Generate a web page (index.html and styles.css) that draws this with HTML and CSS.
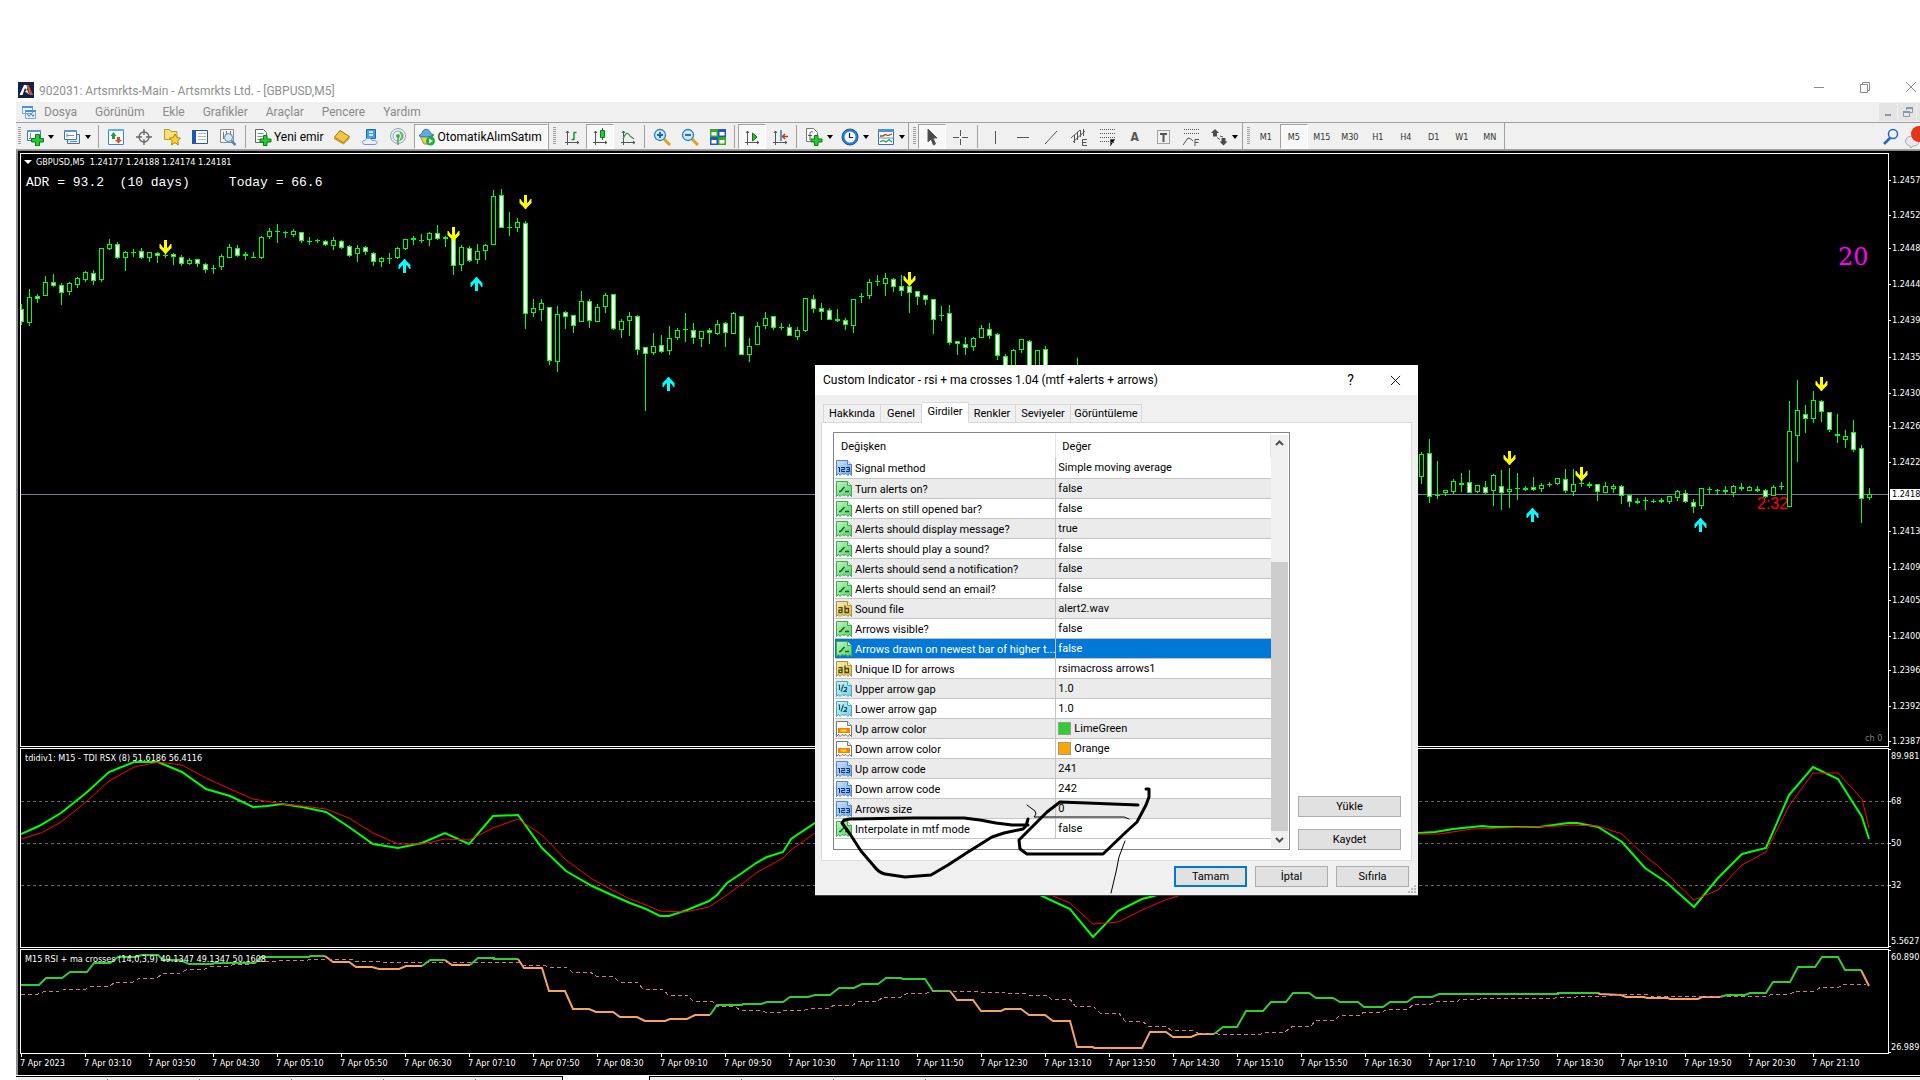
FILE: index.html
```
<!DOCTYPE html>
<html lang="tr">
<head>
<meta charset="utf-8">
<title>902031: Artsmrkts-Main - Artsmrkts Ltd. - [GBPUSD,M5]</title>
<link rel="stylesheet" href="styles.css">
</head>
<body>
<svg class="defs" aria-hidden="true">
  <defs>
    <linearGradient id="gGreen" x2="1" y2="1"><stop offset="0" stop-color="#b9f7bd"/><stop offset="1" stop-color="#5fd06c"/></linearGradient>
    <linearGradient id="gBlue" x2="1" y2="1"><stop offset="0" stop-color="#cfe4fb"/><stop offset="1" stop-color="#6ea6e0"/></linearGradient>
    <linearGradient id="gGold" x2="1" y2="1"><stop offset="0" stop-color="#f6edb0"/><stop offset="1" stop-color="#d9c254"/></linearGradient>
    <linearGradient id="gCyan" x2="1" y2="1"><stop offset="0" stop-color="#d2f4fa"/><stop offset="1" stop-color="#74cfe0"/></linearGradient>
    <path id="page" d="M.5.5h11l4 4v11l-2-2-1.500 2-2-2-2 1-2-1-2 2-1.500-2-2 2z"/>
  </defs>
  <symbol id="t-bool" viewBox="0 0 16 16"><use href="#page" fill="url(#gGreen)" stroke="#3fa850"/><path d="M11.500.5v4h4" fill="#dcfbe0" stroke="#3fa850"/><path d="M3 10.500h1.500L8.500 6M9 10.500h4" fill="none" stroke="#14602a" stroke-width="1.500"/></symbol>
  <symbol id="t-int" viewBox="0 0 16 16"><use href="#page" fill="url(#gBlue)" stroke="#4f86c4"/><path d="M11.500.5v4h4" fill="#eaf3fd" stroke="#4f86c4"/><path d="M2 7.500h1.500V12M5 7.500h3.500v2h-3v2H9M10 7.500h3.500v4H10M11 9.500h2.500" fill="none" stroke="#0f2f66"/></symbol>
  <symbol id="t-str" viewBox="0 0 16 16"><use href="#page" fill="url(#gGold)" stroke="#a8923a"/><path d="M11.500.5v4h4" fill="#fbf7d8" stroke="#a8923a"/><path d="M2.500 6.700h3.500v5H3v-2.500h3M9 4.500v7h3.500V7.500H9" fill="none" stroke="#4d4008" stroke-width="1.300"/></symbol>
  <symbol id="t-dbl" viewBox="0 0 16 16"><use href="#page" fill="url(#gCyan)" stroke="#4ba6ba"/><path d="M11.500.5v4h4" fill="#ecfbfe" stroke="#4ba6ba"/><path d="M2.500 4h1v5M7.500 3.500l-2.500 7M8 6.500h2.500v2L8 10.500h3" fill="none" stroke="#175564" stroke-width="1.200"/></symbol>
  <symbol id="t-col" viewBox="0 0 16 16"><use href="#page" fill="#fff" stroke="#777"/><path d="M11.500.5v4h4" fill="#eee" stroke="#777"/><path d="M2 7h12v5H2z" fill="#ff7a00"/><path d="M4.500 8.500h6v2h-6z" fill="#ffee20"/></symbol>
</svg>

<div class="app">
  <header class="titlebar">
    <svg class="logo" viewBox="0 0 16 16"><path fill="#14224a" d="M0 0h16v16H0z"/><path fill="#fff" d="M1.500 13L6 3h2.500l1 3-1 2L7 6l-2.500 7z"/><path fill="#e0532c" d="M8.500 3h2l4.500 10h-3z"/><path fill="#fff" d="M7 10l2-2.500 2.500 5.500L9 10.500z"/></svg>
    <h1>902031: Artsmrkts-Main - Artsmrkts Ltd. - [GBPUSD,M5]</h1>
    <div class="winctl">
      <button aria-label="Simge durumuna küçült"><svg viewBox="0 0 12 12"><path d="M1 6.500h10"/></svg></button>
      <button aria-label="Geri yükle"><svg viewBox="0 0 12 12"><path d="M1.500 3.500h7v8h-7zM3.500 3.500v-2h7v8h-2"/></svg></button>
      <button aria-label="Kapat"><svg viewBox="0 0 12 12"><path d="M1 1l10 10M11 1L1 11"/></svg></button>
    </div>
  </header>

  <nav class="menubar">
    <svg class="docicon" viewBox="0 0 15 15"><path fill="#e8f2fb" stroke="#7ba6cf" d="M1.500 1.500h10v7h-10zM4.500 5.500h10v8h-10z"/><path fill="#4f8fd0" d="M1 1h11v2H1zM4 5h11v2H4z"/><path fill="none" stroke="#4a7fb5" d="M6 8.500l2 3 2-3 2 3 1-2"/></svg>
    <a href="#">Dosya</a><a href="#">Görünüm</a><a href="#">Ekle</a><a href="#">Grafikler</a><a href="#">Araçlar</a><a href="#">Pencere</a><a href="#">Yardım</a>
    <div class="docctl">
      <button aria-label="Küçült"><svg viewBox="0 0 16 16"><path fill="#8698aa" d="M5 10h6v2H5z"/></svg></button>
      <button aria-label="Önceki boyut"><svg viewBox="0 0 16 16"><path fill="none" stroke="#8698aa" stroke-width="1" d="M4.500 7.500h6v5h-6zM7.500 6V3.500h6v5H11"/><path fill="#8698aa" d="M4 7h7v2H4zM7 3h7v2H7z"/></svg></button>
      <button aria-label="Pencereyi kapat"></button>
    </div>
  </nav>

  <div class="toolbar">
    <div class="group first">
      <button class="drop" aria-label="Yeni grafik"><svg viewBox="0 0 18 18"><path fill="#fff" stroke="#3c73b0" d="M1.500 2.500h13v10h-13z"/><path fill="#5c96d4" d="M1 2h14v2H1z"/><path stroke="#6a8bb0" d="M4.500 5v6M3 10.500h5"/><path fill="#22cc32" stroke="#0b7a18" d="M9.500 6.500h4v4h4v3.500h-4v4h-4v-4h-4v-3.500h4z"/></svg></button>
      <button class="drop" aria-label="Profiller"><svg viewBox="0 0 18 18"><path fill="#e4eefa" stroke="#3c73b0" d="M4.500 6.500h12v9h-12z"/><path fill="#fff" stroke="#3c73b0" d="M1.500 2.500h12v9h-12z"/><path fill="#5c96d4" d="M1 2h13v2H1z"/><path fill="none" stroke="#6a8bb0" d="M4 7.500h7M4 5.500v4M7 13.500h7"/></svg></button>
      <i class="sep"></i>
      <button aria-label="Piyasa gözlemi"><svg viewBox="0 0 18 18"><path fill="#fff" stroke="#3c86d0" d="M1.500 1.500h15v15h-15z"/><path fill="#5fb0ee" d="M1 1h16v2H1z"/><path fill="#1da035" d="M6.500 4l3 4H8v3H5V8H3.500z"/><path fill="#e04f2a" d="M11.500 15.500L8 12h2V9h3v3h2z"/></svg></button>
      <button aria-label="Veri penceresi"><svg viewBox="0 0 18 18"><g fill="none" stroke="#666" stroke-width="1.300"><circle cx="9" cy="9" r="5"/><path d="M9 1v6M9 11v6M1 9h6M11 9h6"/></g></svg></button>
      <button aria-label="Gezgin"><svg viewBox="0 0 18 18"><path fill="#f8e27a" stroke="#b99a24" d="M1.500 3V1.500h5L8 3.500h6v8H1.500z"/><path fill="#ffd23a" stroke="#b08114" d="M12 6l1.800 3.600 3.700.5-2.700 2.700.6 4-3.400-2-3.500 2 .7-4-2.700-2.700 3.800-.5z"/></svg></button>
      <button aria-label="Terminal"><svg viewBox="0 0 18 18"><path fill="#fff" stroke="#1f5aa6" d="M1.500 2.500h15v13h-15z"/><path fill="#1f5aa6" d="M1 2h4v14H1z"/><path stroke="#9fb9d6" d="M7 5.500h8M7 8.500h8M7 11.500h8"/></svg></button>
      <button aria-label="Strateji sınayıcı"><svg viewBox="0 0 18 18"><path fill="#f4f4f4" stroke="#8c8c8c" d="M1.500 1.500h13v13h-13z"/><path stroke="#777" d="M4.500 4v7M7.500 3v4M11.500 3v5"/><circle cx="9.500" cy="9.500" r="4" fill="#cfe6fa" fill-opacity=".85" stroke="#4f86c4"/><path stroke="#4f86c4" stroke-width="2.500" d="M12.500 13l4 4"/></svg></button>
      <i class="sep"></i>
      <button class="text"><svg viewBox="0 0 18 18"><path fill="#fff" stroke="#666" d="M1.500 1.500h8l3 3v10h-11z"/><path stroke="#888" d="M3.500 5.500h6M3.500 8.500h5M3.500 11.500h3"/><path fill="#22cc32" stroke="#0b7a18" d="M9.500 7.500h3.500v3.500h4v3h-4v3.500H9.500V14h-3.500v-3h3.500z"/></svg>Yeni emir</button>
      <button aria-label="MetaEditor"><svg viewBox="0 0 18 18"><path fill="#f2c544" stroke="#9c741a" d="M1.500 9L7 2.500l9.500 6L10.500 15z"/><path fill="#c48a1c" d="M1 9.500l9.500 6 6-6.500v1.500l-6 6L1 11z"/></svg></button>
      <button aria-label="Sanal sunucu"><svg viewBox="0 0 18 18"><path fill="#3ea2ee" stroke="#1d68b4" d="M5.500 1.500h9v9h-9z"/><path stroke="#fff" stroke-width="1.500" d="M8 4h4M8 7h4"/><path fill="#e8eff8" stroke="#7a96c0" d="M4 16.500c-4-1-3-4 0-4 1-3 6-3 7 0 5-1 7 3 3 4z"/></svg></button>
      <button aria-label="Sinyaller"><svg viewBox="0 0 18 18"><g fill="none" stroke="#8fa6b4"><circle cx="9" cy="8" r="7.500"/><circle cx="9" cy="8" r="5"/></g><path fill="none" stroke="#5cb868" stroke-width="2" d="M11 4c3 2 3 6 0 8"/><circle cx="9" cy="8" r="2" fill="#3fae4e"/><path stroke="#3fae4e" stroke-width="1.500" d="M9 9v8"/></svg></button>
      <button class="text auto pressed"><svg viewBox="0 0 18 18"><path fill="#f2cf52" stroke="#a8852a" d="M2 8h13l-4 8H6z"/><path fill="#5aaee4" stroke="#2a74ac" d="M1 7.500C3 6 4 6 4.500 4 5 .5 11 .5 12 4c.5 1.500 2 2 4 3-3 2-12 3-15 .5z"/><circle cx="12.500" cy="13" r="4.500" fill="#1db331"/><path fill="#fff" d="M11 10.500l4 2.500-4 2.500z"/></svg>OtomatikAlımSatım</button>
    </div>
    <div class="group charts">
      <button aria-label="Çubuk grafik"><svg viewBox="0 0 18 18"><path class="ax" d="M4.500 3v14M2 14.500h14M3 5l1.500-2L6 5M14 13l2 1.500-2 1.500"/><path fill="none" stroke="#14962a" stroke-width="1.500" d="M11 4v8M11 4.500h2.500M8.500 11.500H11"/></svg></button>
      <button class="pressed" aria-label="Mum grafik"><svg viewBox="0 0 18 18"><path class="ax" d="M4.500 3v14M2 14.500h14M3 5l1.500-2L6 5M14 13l2 1.500-2 1.500"/><path stroke="#0a7a1a" d="M11.500 0v12"/><path fill="#28c83c" stroke="#0a7a1a" d="M9.500 2.500h4v7h-4z"/></svg></button>
      <button aria-label="Çizgi grafik"><svg viewBox="0 0 18 18"><path class="ax" d="M4.500 3v14M2 14.500h14M3 5l1.500-2L6 5M14 13l2 1.500-2 1.500"/><path fill="none" stroke="#3a9a4a" stroke-width="1.300" d="M4 11c3-7 5-7 7-3l4 3"/></svg></button>
      <i class="sep"></i>
      <button aria-label="Yakınlaştır"><svg viewBox="0 0 18 18"><path stroke="#d8a520" stroke-width="3" d="M11 11l6 6"/><circle cx="7" cy="7" r="5.500" fill="#cdeafc" stroke="#2f7fc4" stroke-width="1.300"/><path stroke="#1d62a8" stroke-width="1.800" d="M4 7h6M7 4v6"/></svg></button>
      <button aria-label="Uzaklaştır"><svg viewBox="0 0 18 18"><path stroke="#d8a520" stroke-width="3" d="M11 11l6 6"/><circle cx="7" cy="7" r="5.500" fill="#cdeafc" stroke="#2f7fc4" stroke-width="1.300"/><path stroke="#1d62a8" stroke-width="1.800" d="M4 7h6"/></svg></button>
      <button aria-label="Pencereleri döşe"><svg viewBox="0 0 18 18"><path fill="#3aa81e" d="M1 1h8v8H1zM9 9h8v8H9z"/><path fill="#2456c8" d="M9 1h8v8H9zM1 9h8v8H1z"/><path fill="#fff" d="M2.500 4h5v3.500h-5zM10.500 4h5v3.500h-5zM2.500 12h5v3.500h-5zM10.500 12h5v3.500h-5z"/></svg></button>
      <i class="sep"></i>
      <button class="pressed" aria-label="Otomatik kaydır"><svg viewBox="0 0 18 18"><path class="ax" d="M4.500 3v14M2 14.500h14M3 5l1.500-2L6 5M14 13l2 1.500-2 1.500"/><path fill="#28b83c" stroke="#0a7a1a" d="M9.500 5l4.500 4-4.500 4z"/></svg></button>
      <button aria-label="Grafik kaydırma"><svg viewBox="0 0 18 18"><path class="ax" d="M4.500 3v14M2 14.500h14M3 5l1.500-2L6 5M14 13l2 1.500-2 1.500"/><path stroke="#3676b8" stroke-width="1.500" d="M10 2v11"/><path fill="none" stroke="#b8400e" stroke-width="1.500" d="M17 8.500h-5M14 6l-2.500 2.500L14 11"/></svg></button>
      <i class="sep"></i>
      <button class="drop" aria-label="Göstergeler"><svg viewBox="0 0 18 18"><path fill="#fff" stroke="#777" d="M1.500.5h7l4 4v9h-11z"/><path fill="none" stroke="#555" d="M8 4c-3-1-3 1-3 3v5M3 7.500h4"/><path fill="#22cc32" stroke="#0b7a18" d="M9.500 7.500h3.500v3.500h4v3h-4v3.500H9.500V14h-3.500v-3h3.500z"/></svg></button>
      <button class="drop" aria-label="Dönemler"><svg viewBox="0 0 18 18"><circle cx="9" cy="9" r="8" fill="#2a7fd4" stroke="#1656a0"/><circle cx="9" cy="9" r="5.500" fill="#f2f8fe"/><path fill="none" stroke="#223" stroke-width="1.200" d="M8.500 5v4.500h3.500"/></svg></button>
      <button class="drop" aria-label="Şablonlar"><svg viewBox="0 0 18 18"><path fill="#fff" stroke="#2f74c0" d="M1.500 1.500h15v15h-15z"/><path fill="#4a90dc" d="M1 1h16v3H1zM1 9.500h16v1H1z"/><path fill="none" stroke="#b03a1a" stroke-width="1.300" d="M3 8h3l2-1.500 3 1L15 6"/><path fill="none" stroke="#2a9a3c" stroke-width="1.300" d="M3 14l3-1.500 3 1.500 3-2.500 3 2.500"/></svg></button>
    </div>
    <div class="group mono">
      <button class="pressed" aria-label="İmleç"><svg viewBox="0 0 18 18"><path fill="#4a4a4a" d="M5 1v13l3-3 2.500 6 2-1L10 10h4z"/></svg></button>
      <button aria-label="Artı imleç"><svg viewBox="0 0 18 18"><path d="M9.500 2v6M9.500 11v6M2 9.500h6M11 9.500h6"/></svg></button>
      <i class="sep"></i>
      <button aria-label="Dikey çizgi"><svg viewBox="0 0 18 18"><path d="M9.500 3v13"/></svg></button>
      <button aria-label="Yatay çizgi"><svg viewBox="0 0 18 18"><path d="M3 9.500h12"/></svg></button>
      <button aria-label="Trend çizgisi"><svg viewBox="0 0 18 18"><path d="M3 16L15 3"/></svg></button>
      <button aria-label="Kanal"><svg viewBox="0 0 18 18"><path d="M1 10l9-8M3 14L15 3M4.500 7v8M7.500 4v8M10.500 2v7M13.500 1v7"/><path fill="none" d="M17 11.500h-4.500v6h4.500M12.500 14.500h4"/></svg></button>
      <button aria-label="Fibonacci"><svg viewBox="0 0 18 18"><path stroke-dasharray="1 1" d="M2 1.500h15M2 5.500h15M2 9.500h15M2 13.500h9"/><path d="M17 11.500h-4.500v6.500M12.500 14.500h3.500"/></svg></button>
      <button class="letter" aria-label="Metin">A</button>
      <button aria-label="Metin etiketi"><svg viewBox="0 0 18 18"><path fill="none" stroke-dasharray="1 1" d="M3.500 2.500h12v13h-12z"/><path stroke-width="2" d="M6 6h7M9.500 6v8"/></svg></button>
      <button aria-label="Fibonacci yayılımı"><svg viewBox="0 0 18 18"><path stroke-dasharray="1 1" d="M2 1.500h15M2 5.500h15"/><path fill="none" d="M1 17l5-7 3 1 2 2M17 11.500h-4v6.500M13 14.500h3.500"/></svg></button>
      <button class="drop" aria-label="Oklar"><svg viewBox="0 0 18 18"><path fill="#4a4a4a" stroke="none" d="M5 1l4 4H7v3.500H3V5H1zM13.500 17.500L9.500 13.500h2V10h4v3.500h2z"/><path d="M7 9.500l3 2M10 8l3 1"/></svg></button>
    </div>
    <div class="group frames">
      <button>M1</button><button class="pressed">M5</button><button>M15</button><button>M30</button><button>H1</button><button>H4</button><button>D1</button><button>W1</button><button>MN</button>
    </div>
    <div class="right">
      <button aria-label="Ara"><svg viewBox="0 0 18 18"><path stroke="#2a62c8" stroke-width="2.500" d="M8 10l-6 6"/><circle cx="11" cy="6" r="4.500" fill="#eaf4ff" stroke="#2a62c8" stroke-width="1.500"/></svg></button>
      <button class="msgs" aria-label="Mesajlar"><svg viewBox="0 0 20 24"><path fill="#e8e8ee" stroke="#a8a8b0" d="M6 11c-7 1-7 9-1 10l1 2 2-2c6 0 6-4 6-6z"/><circle cx="14" cy="9" r="8" fill="#e2361c"/></svg></button>
    </div>
  </div>

  <main class="workspace">
    <section class="panel price">
      <svg id="price" class="plot"></svg>
      <div class="caption"><span class="tri"></span>GBPUSD,M5&nbsp; 1.24177 1.24188 1.24174 1.24181</div>
      <pre class="adr">ADR = 93.2  (10 days)     Today = 66.6</pre>
    </section>
    <svg id="axisPrice" class="axis"></svg>
    <section class="panel tdi">
      <svg id="tdi" class="plot"></svg>
      <div class="caption">tdidiv1: M15 - TDI RSX (8) 51.6186 56.4116</div>
    </section>
    <svg id="axisTdi" class="axis"></svg>
    <section class="panel rsi">
      <svg id="rsi" class="plot"></svg>
      <div class="caption">M15 RSI + ma crosses (14,0,3,9) 49.1347 49.1347 50.1608</div>
    </section>
    <svg id="axisRsi" class="axis"></svg>
    <div class="dates" id="dates"></div>
  </main>
  <div class="tabstrip"><div class="seg left"><i></i><i></i><i></i><i></i><i></i></div><div class="gap"></div><div class="seg rest"><i></i><i></i><i></i></div></div>
</div>

<div class="dialog" role="dialog" aria-label="Custom Indicator">
  <div class="dlg-title">
    <h2>Custom Indicator - rsi + ma crosses 1.04 (mtf +alerts + arrows)</h2>
    <button aria-label="Yardım">?</button>
    <button aria-label="Kapat"><svg viewBox="0 0 12 12"><path d="M1 1l10 10M11 1L1 11"/></svg></button>
  </div>
  <div class="dlg-tabs">
    <button>Hakkında</button><button>Genel</button><button class="on">Girdiler</button><button>Renkler</button><button>Seviyeler</button><button>Görüntüleme</button>
  </div>
  <div class="dlg-page">
    <div class="list">
      <table>
        <thead><tr><th>Değişken</th><th>Değer</th></tr></thead>
        <tbody>
          <tr><td><svg><use href="#t-int"/></svg>Signal method</td><td>Simple moving average</td></tr>
          <tr><td><svg><use href="#t-bool"/></svg>Turn alerts on?</td><td>false</td></tr>
          <tr><td><svg><use href="#t-bool"/></svg>Alerts on still opened bar?</td><td>false</td></tr>
          <tr><td><svg><use href="#t-bool"/></svg>Alerts should display message?</td><td>true</td></tr>
          <tr><td><svg><use href="#t-bool"/></svg>Alerts should play a sound?</td><td>false</td></tr>
          <tr><td><svg><use href="#t-bool"/></svg>Alerts should send a notification?</td><td>false</td></tr>
          <tr><td><svg><use href="#t-bool"/></svg>Alerts should send an email?</td><td>false</td></tr>
          <tr><td><svg><use href="#t-str"/></svg>Sound file</td><td>alert2.wav</td></tr>
          <tr><td><svg><use href="#t-bool"/></svg>Arrows visible?</td><td>false</td></tr>
          <tr class="sel"><td><svg><use href="#t-bool"/></svg>Arrows drawn on newest bar of higher t...</td><td>false</td></tr>
          <tr><td><svg><use href="#t-str"/></svg>Unique ID for arrows</td><td>rsimacross arrows1</td></tr>
          <tr><td><svg><use href="#t-dbl"/></svg>Upper arrow gap</td><td>1.0</td></tr>
          <tr><td><svg><use href="#t-dbl"/></svg>Lower arrow gap</td><td>1.0</td></tr>
          <tr><td><svg><use href="#t-col"/></svg>Up arrow color</td><td><i class="swatch lime"></i>LimeGreen</td></tr>
          <tr><td><svg><use href="#t-col"/></svg>Down arrow color</td><td><i class="swatch orange"></i>Orange</td></tr>
          <tr><td><svg><use href="#t-int"/></svg>Up arrow code</td><td>241</td></tr>
          <tr><td><svg><use href="#t-int"/></svg>Down arrow code</td><td>242</td></tr>
          <tr><td><svg><use href="#t-int"/></svg>Arrows size</td><td>0</td></tr>
          <tr><td><svg><use href="#t-bool"/></svg>Interpolate in mtf mode</td><td>false</td></tr>
        </tbody>
      </table>
      <div class="scroll">
        <svg viewBox="0 0 17 17"><path d="M5 10l3.500-3.500L12 10"/></svg>
        <div class="track"><div class="thumb"></div></div>
        <svg viewBox="0 0 17 17"><path d="M5 7l3.500 3.500L12 7"/></svg>
      </div>
    </div>
    <div class="side"><button class="btn">Yükle</button><button class="btn">Kaydet</button></div>
  </div>
  <div class="dlg-foot"><button class="btn ok">Tamam</button><button class="btn">İptal</button><button class="btn">Sıfırla</button></div>
  <svg class="sizer" viewBox="0 0 8 8"><path fill="#bbb" d="M6 0h2v2H6zM3 3h2v2H3zM6 3h2v2H6zM0 6h2v2H0zM3 6h2v2H3zM6 6h2v2H6z"/></svg>
  <svg class="ink">
    <path class="thick" d="M213 460H197L181 458 165 455 149 453H98L35 454 29 455 27 458 35 469 46 486 58 500Q64 508 70 509L90 512 116 510 133 500 153 487 177 472 189 468 208 464 211 461 213 454"/>
    <path class="thick" d="M331 424H334V432L331 440 322 457 311 467 288 489H212L205 484 204 475 232 447 245 437 272 438 323 440"/>
    <path d="M212 440L220 446 221 449 219 452H309L314 454M310 476L304 492 301 507 296 528"/>
  </svg>
</div>
<script src="chart.js"></script>
</body>
</html>
```
FILE: styles.css
```
* { box-sizing: border-box; }
body { margin: 0; height: 100vh; overflow: hidden; background: #fff; position: relative; font: 12px/16px Roboto, "Open Sans", sans-serif; color: #000; }
button { font: inherit; color: inherit; border: 0; background: none; padding: 0; margin: 0; }
h1, h2, pre { margin: 0; font-size: 12px; font-weight: 400; }
i { font-style: normal; }
.defs { position: absolute; width: 0; height: 0; }

.app { display: flex; flex-direction: column; height: 100vh; padding: 76px 0 0 16px; }

.titlebar { display: flex; align-items: center; flex: none; height: 26px; color: #8f8f8f; }
.logo { width: 16px; height: 16px; margin: 2px 5px 0 2px; }
.titlebar h1 { padding-top: 4px; }
.winctl { display: flex; margin-left: auto; margin-right: -14px; }
.winctl button { width: 46px; height: 26px; }
.winctl svg { width: 12px; height: 12px; fill: none; stroke: #8c8c8c; }

.menubar { display: flex; align-items: center; flex: none; height: 20px; background: #f0f0f0; color: #8a8a8a; }
.menubar a { color: inherit; text-decoration: none; margin-right: 18px; }
.docicon { width: 15px; height: 15px; margin: 0 8px 0 5px; }
.docctl { display: flex; gap: 1px; margin-left: auto; margin-right: -15px; align-self: stretch; }
.docctl button { width: 18px; height: 18px; margin-top: 1px; background: #e4e4e4; }
.docctl svg { width: 16px; height: 16px; display: block; margin: auto; }

.toolbar { display: flex; flex: none; height: 28px; border-top: 1px solid #a0a0a0; border-bottom: 1px solid #a0a0a0; background: #f0f0f0; overflow: hidden; }
.group { display: flex; align-items: stretch; position: relative; padding: 1px 0 0 9px; border-right: 1px solid #a0a0a0; }
.group::before { content: ""; position: absolute; left: 4px; top: 4px; bottom: 4px; width: 3px; background: repeating-linear-gradient(#a0a0a0 0 1px, #f0f0f0 1px 2px); }
.group.first { padding-left: 5px; }
.group.first::before { left: 2px; }
.toolbar button { display: flex; align-items: center; justify-content: center; width: 28px; flex: none; padding-top: 1px; }
.toolbar svg { width: 18px; height: 18px; flex: none; }
.toolbar .drop { width: 37px; justify-content: flex-start; padding-left: 5px; }
.charts .drop { width: 36px; }
.drop::after { content: ""; border: 3px solid transparent; border-top: 4px solid #000; border-bottom: 0; margin-left: 4px; }
.toolbar .sep { width: 1px; margin: 1px 3px; background: #a0a0a0; }
.toolbar .charts .sep { margin: 1px 3px 1px 2px; }
.toolbar .text { width: auto; padding: 0 4px 0 5px; gap: 2px; }
.toolbar .auto { margin-left: 2px; padding-left: 3px; padding-right: 5px; }
.toolbar .pressed { border: 1px solid #fff; border-top-color: #a0a0a0; border-left-color: #a0a0a0; background: #f8f8f8; }
.ax { fill: none; stroke: #555; }
.mono svg { stroke: #555; }
.toolbar .letter { font: 700 12px/16px "DejaVu Sans Condensed", sans-serif; color: #555; }
.frames { font: 9px/12px "DejaVu Sans Condensed", "DejaVu Sans", sans-serif; color: #333; }
.right { display: flex; margin-left: auto; margin-right: -13px; }
.toolbar .msgs { justify-content: flex-start; }
.msgs svg { width: 20px; height: 24px; }

.workspace { display: grid; grid-template-columns: minmax(0, 1fr) 31px; grid-template-rows: minmax(0, 1fr) 200px 105px 20px; row-gap: 1px; flex: 1; min-height: 0; background: #000; border: 2px solid #8c8c8c; border-top-width: 1px; border-right: 0; border-bottom: 0; padding: 2px 0 0 2px; overflow: hidden; }
.panel { position: relative; border: 1px solid #fff; overflow: hidden; }
.plot { position: absolute; left: 0; top: 0; width: 100%; height: 100%; }
.axis { width: 31px; height: 100%; overflow: hidden; display: block; }
.caption { position: relative; padding: 3px 0 0 4px; font: 9px/12px "DejaVu Sans Condensed", "DejaVu Sans", sans-serif; color: #fff; white-space: pre; }
.price .caption { padding: 2px 0 0 3px; }
.tri { display: inline-block; border: 4px solid transparent; border-top-color: #fff; border-bottom: 0; margin-right: 4px; vertical-align: 1px; }
.adr { position: relative; padding: 7px 0 0 5px; font: 13px/16px "Liberation Mono", monospace; color: #fff; }
.dates { grid-column: 1 / -1; display: flex; margin-top: -1px; overflow: hidden; font: 9px/12px "DejaVu Sans Condensed", "DejaVu Sans", sans-serif; color: #fff; }
.dates span { flex: none; width: 64px; padding-top: 3px; background: linear-gradient(#fff, #fff) 1px 0 / 1px 3px no-repeat; white-space: nowrap; }
svg text { font: 9px "DejaVu Sans Condensed", "DejaVu Sans", sans-serif; fill: #fff; }
svg text.big { font: 24px "DejaVu Serif", serif; fill: #f0f; }
svg text.timer { font: 16px "Liberation Sans", sans-serif; fill: #f00; }
svg text.dim { fill: #808080; }
svg text.dark { fill: #000; }

.tabstrip { display: flex; flex: none; height: 5px; padding-top: 1px; background: #fff; }
.tabstrip .seg { display: flex; border-top: 1px solid #000; background: #f0f0f0; }
.seg i { width: 92px; border-right: 1px solid #777; margin-top: 2px; }
.seg.left { width: 547px; border-right: 1px solid #000; }
.tabstrip .gap { width: 86px; }
.seg.rest { flex: 1; border-left: 1px solid #000; }

.dialog { position: absolute; left: 815px; top: 365px; width: 603px; height: 531px; background: #f0f0f0; display: flex; flex-direction: column; border-bottom: 1px solid #444; }
.dlg-title { display: flex; align-items: center; flex: none; height: 30px; padding-left: 8px; background: #fff; }
.dlg-title h2 { flex: 1; }
.dlg-title button { width: 45px; height: 30px; font-size: 14px; }
.dlg-title svg { width: 11px; height: 11px; stroke: #000; fill: none; display: block; margin: auto; }
.dlg-tabs { display: flex; align-items: flex-end; flex: none; height: 28px; margin: 0 0 -1px 8px; font-size: 11px; position: relative; z-index: 1; }
.dlg-tabs button { flex: none; height: 19px; width: 47px; border: 1px solid #d9d9d9; border-left-width: 0; background: #f0f0f0; white-space: nowrap; display: flex; align-items: center; justify-content: center; }
.dlg-tabs button:first-child { width: 58px; border-left-width: 1px; }
.dlg-tabs button:nth-child(2) { width: 41px; }
.dlg-tabs button:nth-child(5) { width: 55px; }
.dlg-tabs button:nth-child(6) { width: 71px; }
.dlg-tabs .on { height: 21px; padding-bottom: 1px; background: #fff; border-bottom-color: #fff; }
.dlg-page { display: flex; gap: 8px; height: 439px; margin: 0 6px; padding: 9px 10px 10px 11px; background: #fff; border: 1px solid #dcdcdc; }
.list { display: flex; width: 458px; border: 1px solid #82878f; padding: 0 1px 0 1px; font-size: 11px; line-height: 14px; }
.list table { flex: 1; border-collapse: collapse; table-layout: fixed; align-self: flex-start; }
.list th { height: 25px; padding: 3px 0 0 6px; text-align: left; font-weight: 400; border-right: 1px solid #e5e5e5; }
.list th:first-child { width: 218px; }
.list td { height: 20px; padding: 1px 0 0 2px; white-space: nowrap; border-bottom: 1px solid #c4c4c4; }
.list td:first-child { padding-left: 1px; border-right: 1px solid #c4c4c4; }
.list td svg { width: 16px; height: 16px; margin-right: 3px; vertical-align: -4px; }
.list tbody tr:nth-child(even) { background: #ebebeb; }
.list tbody tr.sel { background: #0078d7; color: #fff; }
.swatch { display: inline-block; width: 13px; height: 13px; border: 1px solid #999; margin-right: 3px; vertical-align: -3px; }
.lime { background: #32cd32; }
.orange { background: #ffa500; }
.scroll { display: flex; flex-direction: column; width: 17px; background: #f0f0f0; margin: 2px 0 1px; }
.scroll svg { width: 17px; height: 17px; flex: none; fill: none; stroke: #505050; stroke-width: 2; }
.track { flex: 1; display: flex; flex-direction: column; justify-content: flex-end; }
.thumb { height: 71%; background: #cdcdcd; }
.side { display: flex; flex-direction: column; justify-content: flex-end; gap: 12px; flex: 1; }
.btn { width: 73px; height: 21px; background: #e1e1e1; border: 1px solid #adadad; font-size: 11px; }
.side .btn { width: 103px; }
.ok { border: 2px solid #0078d7; }
.dlg-foot { display: flex; justify-content: flex-end; gap: 8px; padding: 5px 9px 0 0; }
.sizer { position: absolute; right: 2px; bottom: 2px; width: 8px; height: 8px; }
.ink { position: absolute; left: 0; top: 0; width: 100%; height: 100%; fill: none; stroke: #000; stroke-linejoin: round; stroke-linecap: round; }
.thick { stroke-width: 3; }
```
FILE: chart.js
```
const NS = 'http://www.w3.org/2000/svg';
const STEP = 8;
const $ = id => document.getElementById(id);
function add(svg, tag, attrs, text) {
  const e = document.createElementNS(NS, tag);
  for (const k in attrs) e.setAttribute(k, attrs[k]);
  if (text !== undefined) e.textContent = text;
  svg.appendChild(e);
  return e;
}
const rect = (s, x, y, w, h, fill) => add(s, 'rect', { x, y, width: w, height: h, fill, 'shape-rendering': 'crispEdges' });

/* Bars: high, body top, body bottom, low in thirds of a pixel; f = bearish, h = bullish, x = doji */
const runs = [
  { start: 0, shift: 0, bars: `463,478,515,524f 417,442,518,527h 433,438,448,458f 378,397,437,437h 372,397,407,411f 400,405,428,465f 395,400,426,434h 380,384,404,413h 363,367,389,396h 360,370,392,405f 295,295,389,395h 267,283,297,300h 276,283,323,327f 303,307,323,362h 297,306,308,320x 294,304,323,327f 306,307,323,335h 305,310,317,338f 300,315,317,324x 310,313,320,345f 315,322,341,347f 324,331,341,344h 328,328,341,350f 340,343,359,369f 346,355,358,371x 312,318,350,360h 281,291,323,323h 286,295,318,321f 306,313,319,330f 306,321,323,323x 258,262,324,327h 234,244,261,267h 222,243,245,279x 243,247,250,263x 237,244,254,261h 246,247,272,279f 261,272,274,285x 268,270,272,279x 270,274,284,288f 261,271,287,300h 270,274,293,297f 285,289,318,321f 285,295,311,335h 288,292,307,315f 306,310,335,348f 321,325,335,351h 309,324,327,342x 291,295,323,327h 267,268,297,300h 258,264,270,285f 252,270,272,278x 246,250,269,288h 225,250,266,270f 258,262,266,291x 245,262,347,375f 285,291,345,363h 288,295,332,336f 282,304,329,342h 282,286,302,330h 120,139,284,285h 117,136,233,234f 186,231,233,258x 204,217,233,246h 213,219,491,537f 447,474,488,501h 447,460,479,513h 471,472,632,645f 468,493,635,665h` },
  { start: 68, shift: 60, bars: `423,427,440,477f 434,436,467,489f 363,394,455,456h 387,394,452,474f 402,412,455,456h 369,376,410,430h 372,373,476,480f 447,454,479,504h 426,439,452,498h 435,438,539,555f 530,532,551,722f 489,529,548,555h 495,526,545,549f 468,505,542,555h 474,481,503,510h 429,477,479,516x 459,481,503,522f 482,484,506,531h 474,481,489,522f 450,463,491,495h 456,460,488,531f 426,430,491,491h 438,439,554,555f 504,529,554,576h 456,469,524,524h 426,445,467,477h 438,439,473,480f 459,471,473,480x 462,472,497,498f 471,481,500,510h 384,385,482,486h 375,388,416,430f 399,415,425,450f 414,421,449,450f 417,448,452,456x 444,451,464,480f 387,388,467,489h 369,379,382,399x 327,337,377,387h 315,333,337,348x 309,325,341,378h 324,328,350,366f 315,349,362,378f 345,349,368,430f 363,364,380,405f 375,376,389,405f 387,388,449,492f 408,436,439,453x 405,430,518,525f 513,514,521,555f 501,523,533,555f 501,505,530,543h 465,475,503,504h 459,478,497,507f 489,493,557,570f 552,559,600,620f 537,541,600,620h 508,508,539,549h 510,512,600,620f 540,541,600,620h 528,538,600,620f` },
  { start: 132, shift: 60, bars: `564,600,603,620x` },
  { start: 175, shift: 600, bars: `306,313,380,402h 267,310,440,459f 333,435,437,447x 420,421,430,438h 387,394,425,432h 369,400,404,426x 360,397,428,429f 405,406,425,430h 393,412,428,432f 372,376,422,468h 360,409,428,480f 354,418,425,474h 369,414,416,450x 408,415,419,423x 381,412,419,423f 399,406,416,426h 396,402,404,411x 384,385,401,405h 357,388,422,429f 357,403,425,438h 390,400,402,411x 396,403,409,414f 402,403,425,453f 396,409,428,429h 402,409,416,429h 405,409,437,462f 435,436,455,471f 444,454,458,462x 441,450,452,480x 447,453,455,459x 444,451,457,460f 437,439,455,462h 420,424,443,453h 420,430,455,459f 447,457,470,489f 414,415,467,477h 411,417,419,432x 416,421,423,434x 408,421,425,432x 405,409,428,441h 399,412,418,423f 408,412,422,423h 408,418,422,426x 417,421,440,443f 405,412,437,438h 396,408,411,420x 153,244,470,471h 90,181,257,336h 165,193,206,249f 123,151,206,219h 150,154,185,216f 186,187,239,246f 192,252,257,279x 240,259,269,294h 210,247,299,306f 285,295,446,519f 414,433,443,450h` }
];
const price = $('price');
rect(price, 0, 340, 1867, 1, '#708090');
const LIME = '#0f0';
for (const run of runs) {
  run.bars.split(' ').forEach((bar, n) => {
    const kind = bar.slice(-1);
    const [hi, top, bot, lo] = bar.slice(0, -1).split(',').map(v => Math.round((+v + run.shift) / 3) - 4);
    const x = (run.start + n) * STEP;
    rect(price, x, hi, 1, Math.max(1, lo - hi), LIME);
    rect(price, x - 2, top, 5, Math.max(1, bot - top), LIME);
    if (kind !== 'x' && bot - top > 2) rect(price, x - 1, top + 1, 3, bot - top - 2, kind === 'f' ? '#fff' : '#000');
  });
}

/* Signal arrows: bar number, top */
const DOWN = 'M-1 0h3v8l1.5-1 2-3h1v4l-4 4-1.5 2h-1l-1.5-2-4-4v-4h1l2 3 1.5 1z';
const UP = 'M-1 14h3v-8l1.5 1 2 3h1v-4l-4-4-1.5-2h-1l-1.5 2-4 4v4h1l2-3 1.5-1z';
for (const [n, y] of [[18, 86], [54, 73], [63, 41], [111, 118], [186, 297], [195, 313], [225, 223]])
  add(price, 'path', { d: DOWN, fill: '#ff0', transform: `translate(${n * STEP} ${y})` });
for (const [n, y] of [[48, 105], [57, 123], [81, 223], [189, 354], [210, 364]])
  add(price, 'path', { d: UP, fill: '#0ff', transform: `translate(${n * STEP - 1} ${y})` });
add(price, 'text', { x: 1817, y: 111, class: 'big' }, '20');
add(price, 'text', { x: 1736, y: 355, class: 'timer' }, '2:32');
add(price, 'text', { x: 1844, y: 587, class: 'dim' }, 'ch 0');

const line = (svg, points, stroke, width, dash) =>
  add(svg, 'polyline', Object.assign({ points, fill: 'none', stroke, 'stroke-width': width }, dash ? { 'stroke-dasharray': dash, 'shape-rendering': 'crispEdges' } : {}));

const tdi = $('tdi');
for (const y of [52, 94, 136]) line(tdi, `0,${y}.5 1867,${y}.5`, '#696969', 1, '3 3');
line(tdi, '0,85 18,77 40,64 65,44 88,23 113,13 137,13 161,23 185,40 209,47 232,58 246,57 261,55 281,58 305,63 328,78 352,95 377,99 401,94 424,84 448,95 472,67 497,66 521,99 545,122 571,137 593,147 609,154 625,160 639,167 648,167 666,161 688,152 696,146 706,134 721,124 735,114 746,108 762,103 770,90 794,74 850,60 920,80 980,120 1021,147 1049,160 1072,188 1097,162 1121,150 1133,147 1200,120 1300,95 1398,84 1414,83 1432,80 1461,77 1471,78 1518,78 1547,74 1556,74 1577,78 1601,93 1624,119 1645,133 1673,158 1697,129 1721,105 1745,99 1768,46 1792,18 1817,30 1841,68 1848,90', LIME, 2);
line(tdi, '0,90 20,84 40,73 65,53 88,32 113,18 138,13 161,16 185,29 209,40 232,50 261,55 281,57 305,60 328,69 352,84 377,95 401,95 424,90 448,91 472,79 497,70 521,86 545,111 571,130 593,142 609,150 625,156 639,162 664,163 688,158 706,146 721,135 735,124 762,109 770,101 794,84 850,66 920,78 980,112 1032,147 1049,154 1072,175 1097,173 1121,161 1144,151 1157,147 1200,130 1300,100 1398,85 1418,85 1451,80 1539,77 1549,76 1577,77 1601,85 1624,107 1637,117 1673,151 1697,141 1721,116 1745,103 1768,57 1792,24 1817,24 1841,50 1848,79', '#f00', 1);

const rsi = $('rsi');
const G = '#32cd32', O = '#f4a460';
[
  [G, '0,35 18,35 25,28 41,28 49,22 66,22 73,13 89,13 97,7 114,7 121,5 137,5 142,10 159,10 168,14 192,14 193,13 234,13 240,7 288,7 289,6 304,6'],
  [O, '304,6 312,12 328,12 335,17 351,17 358,19 378,19 385,16 401,16'],
  [G, '401,16 409,10 424,10'],
  [O, '424,10 431,15 449,15'],
  [G, '449,15 457,8 473,8 473,9 497,9'],
  [O, '497,9 503,18 521,18 528,41 544,41 552,59 568,59 575,62 592,62 599,67 616,67 624,71 644,71 649,69 666,69 674,65 689,65'],
  [G, '689,65 696,55 721,55 722,54 740,54 746,52 762,52 769,47 787,47 794,45 809,45 818,38 833,38 841,34 857,34 865,28 880,28 882,29 904,29 912,41 929,41'],
  [O, '929,41 936,50 952,50 960,61 980,61 984,59 1000,59 1008,65 1024,65 1032,71 1049,71 1056,97 1072,97 1073,98 1121,98 1129,82 1145,82 1152,87 1170,87 1177,84 1193,84'],
  [G, '1193,84 1202,77 1216,77 1225,61 1242,61 1250,52 1265,52 1272,43 1288,43 1295,48 1312,48 1319,52 1337,52 1343,57 1362,57 1369,52 1386,52 1393,47 1411,47 1418,44 1537,44 1537,43 1577,43'],
  [O, '1577,43 1579,44 1600,45 1605,47 1623,47 1626,48 1647,48 1649,49 1677,49 1681,47 1699,47'],
  [G, '1699,47 1706,45 1724,45 1729,43 1745,43 1752,32 1769,32 1777,17 1794,17 1801,7 1817,7 1824,20 1840,20'],
  [O, '1840,20 1848,36']
].forEach(([c, p]) => line(rsi, p, c, 2));
line(rsi, '0,44 17,44 22,42 38,41 46,39 65,39 70,36 88,36 95,32 112,32 119,28 136,28 142,23 159,23 167,19 184,19 191,16 208,16 214,14 231,14 237,11 257,11 261,10 287,10 289,9 330,9 334,11 357,11 359,12 497,12 501,15 522,15 528,17 546,17 551,22 569,22 575,26 592,26 598,32 616,32 622,39 642,39 647,45 666,45 672,51 691,51 696,56 713,56 719,60 739,60 744,62 760,62 764,60 784,60 791,58 809,58 813,55 832,55 838,51 857,51 862,47 880,47 887,43 906,43 912,41 956,41 958,42 983,42 984,43 1003,43 1007,45 1025,45 1030,49 1049,49 1054,56 1072,56 1079,63 1098,63 1104,71 1121,71 1127,76 1144,76 1150,80 1170,80 1177,83 1193,83 1197,84 1240,84 1244,82 1264,82 1272,76 1290,76 1295,70 1314,70 1319,65 1339,65 1343,62 1361,62 1367,59 1387,59 1393,54 1410,54 1416,51 1437,51 1439,49 1459,49 1461,48 1534,48 1555,47 1563,46 1585,46 1600,44 1628,44 1630,46 1747,46 1751,44 1769,44 1775,41 1794,41 1800,37 1818,37 1824,34 1845,34', '#db7093', 1, '4 3');

/* Value scales; y is the middle of the label */
const axisPrice = $('axisPrice');
[['1.2457', 27], ['1.2452', 62], ['1.2448', 95], ['1.2444', 131], ['1.2439', 167], ['1.2435', 204], ['1.2430', 240], ['1.2426', 273], ['1.2422', 309], ['1.2418', 341], ['1.2413', 378], ['1.2409', 414], ['1.2405', 447], ['1.2400', 483], ['1.2396', 517], ['1.2392', 553], ['1.2387', 588]].forEach(([t, y]) => {
  const now = t === '1.2418';
  if (now) rect(axisPrice, 1, y - 5, 30, 11, '#fff');
  else rect(axisPrice, 0, y, 2, 1, '#fff');
  add(axisPrice, 'text', { x: 3, y: y + 3, class: now ? 'dark' : '' }, t);
});
const scale = (id, rows) => rows.forEach(([t, y, tick]) => {
  rect($(id), 0, tick, 2, 1, '#fff');
  add($(id), 'text', { x: 2, y: y + 3 }, t);
});
scale('axisTdi', [['89.981', 8, 1], ['68', 53, 53], ['50', 95, 95], ['32', 137, 137], ['5.5627', 193, 198]]);
scale('axisRsi', [['60.890', 8, 1], ['26.989', 98, 103]]);

/* One date label every eight bars */
const dates = $('dates');
for (let n = 0, m = 150; n < 29; n++, m += 40) {
  const s = document.createElement('span');
  const p = v => String(v).padStart(2, '0');
  s.textContent = n ? `7 Apr ${p(Math.floor(m / 60))}:${p(m % 60)}` : '7 Apr 2023';
  dates.appendChild(s);
}
```
